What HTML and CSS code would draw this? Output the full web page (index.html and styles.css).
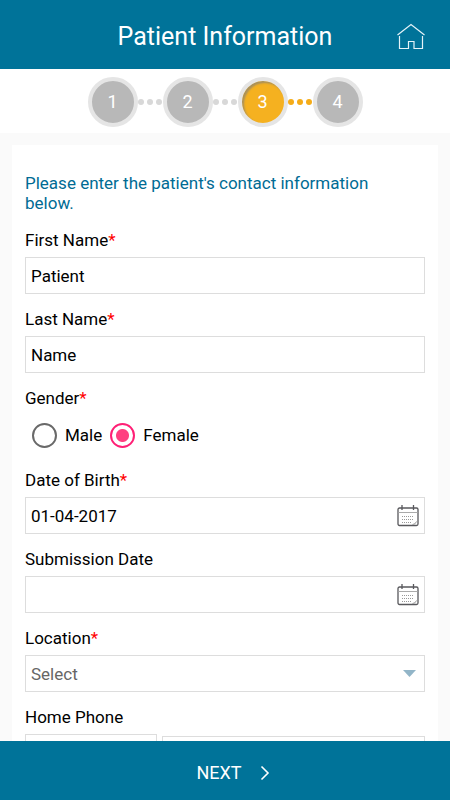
FILE: index.html
```
<!DOCTYPE html>
<html lang="en">
<head>
<meta charset="utf-8">
<meta name="viewport" content="width=device-width, initial-scale=1">
<title>Patient Information</title>
<link rel="stylesheet" href="styles.css">
</head>
<body>
<svg width="0" height="0" class="sprite" aria-hidden="true">
  <symbol id="calendar" viewBox="0 0 22 23">
    <rect x="1" y="4" width="20" height="17.5" rx="1.5" fill="#fff" stroke="#58585c" stroke-width="1.3"/>
    <path d="M1.500 8.500h19" stroke="#aaa" stroke-width="1"/>
    <path d="M5 1v5M16.500 1v5" stroke="#58585c" stroke-width="1.3"/>
    <path d="M5 12.500h12M5 15.500h12M5 18.500h9" stroke="#999" stroke-width="1" stroke-dasharray="1 1"/>
    <path d="M15.500 20.500q3 0 4-3" fill="none" stroke="#999" stroke-width="1"/>
  </symbol>
</svg>
<header class="header">
  <h1>Patient Information</h1>
  <a class="home" href="#" aria-label="Home">
    <svg width="30" height="28" viewBox="0 0 30 28" fill="none" stroke="#e4f3f8" stroke-width="1.2"><path d="M1.500 12L15 1.500 28.500 12M3.500 13v12.500h9V18.500h5.500v7h8.500V13"/></svg>
  </a>
</header>
<ol class="steps">
  <li class="step">1</li>
  <li class="dots" aria-hidden="true"><i></i><i></i><i></i></li>
  <li class="step">2</li>
  <li class="dots" aria-hidden="true"><i></i><i></i><i></i></li>
  <li class="step current" aria-current="step">3</li>
  <li class="dots active" aria-hidden="true"><i></i><i></i><i></i></li>
  <li class="step">4</li>
</ol>
<main class="content">
  <form class="card" id="patient">
    <p class="intro">Please enter the patient's contact information below.</p>
    <div class="field">
      <label for="first">First Name<span class="req">*</span></label>
      <input class="control" id="first" type="text" value="Patient">
    </div>
    <div class="field">
      <label for="last">Last Name<span class="req">*</span></label>
      <input class="control" id="last" type="text" value="Name">
    </div>
    <fieldset class="field">
      <legend>Gender<span class="req">*</span></legend>
      <div class="radios">
        <label class="radio"><input type="radio" name="gender">Male</label>
        <label class="radio"><input type="radio" name="gender" checked>Female</label>
      </div>
    </fieldset>
    <div class="field">
      <label for="dob">Date of Birth<span class="req">*</span></label>
      <div class="date">
        <input class="control" id="dob" type="text" value="01-04-2017">
        <button type="button" aria-label="Choose date of birth"><svg width="22" height="23"><use href="#calendar"/></svg></button>
      </div>
    </div>
    <div class="field">
      <label for="submitted">Submission Date</label>
      <div class="date">
        <input class="control" id="submitted" type="text">
        <button type="button" aria-label="Choose submission date"><svg width="22" height="23"><use href="#calendar"/></svg></button>
      </div>
    </div>
    <div class="field">
      <label for="location">Location<span class="req">*</span></label>
      <div class="drop">
        <select class="control" id="location"><option>Select</option></select>
        <svg width="13" height="7" viewBox="0 0 13 7" aria-hidden="true"><path d="M0 0h13L6.500 7z" fill="#92b5c8"/></svg>
      </div>
    </div>
    <div class="field">
      <label for="phone">Home Phone</label>
      <div class="phone">
        <input class="control" type="tel" aria-label="Country code">
        <input class="control number" id="phone" type="tel">
      </div>
    </div>
  </form>
</main>
<button class="next" type="submit" form="patient">NEXT
  <svg width="10" height="16" viewBox="0 0 10 16" fill="none" stroke="#fff" stroke-width="1.6"><path d="M1.500 1.500L8 8l-6.500 6.500"/></svg>
</button>
</body>
</html>
```
FILE: styles.css
```
* { box-sizing: border-box; }

body {
  margin: 0;
  height: 100vh;
  display: flex;
  flex-direction: column;
  background: #fafafa;
  color: #000;
  font: 17px/20px Roboto, sans-serif;
}

.sprite { position: absolute; }

.header {
  flex: none;
  height: 69px;
  display: grid;
  grid-template-columns: 1fr auto 1fr;
  align-items: center;
  padding: 4px 24px 0;
  background: #007399;
  color: #fff;
}

.header h1 {
  grid-column: 2;
  margin: 0;
  font-size: 25px;
  line-height: 32px;
  font-weight: 400;
}

.home { justify-self: end; display: flex; }

.steps {
  flex: none;
  height: 64px;
  margin: 0;
  padding: 1px 0 0;
  display: flex;
  align-items: center;
  justify-content: center;
  list-style: none;
  background: #fff;
}

.step {
  width: 50px;
  height: 50px;
  display: flex;
  align-items: center;
  justify-content: center;
  border: 4px solid #e5e5e5;
  border-radius: 50%;
  background: #b8b8b8;
  color: #fff;
  font-size: 18px;
}

.step.current {
  background: #f5b120;
  box-shadow: inset 2px 2px 2px #a8905c;
}

.dots {
  width: 25px;
  display: flex;
  justify-content: center;
  gap: 3px;
}

.dots i {
  width: 6px;
  height: 6px;
  border-radius: 50%;
  background: #d8d8d8;
}

.dots.active i { background: #f5ac18; }

.content {
  flex: 1;
  min-height: 0;
  overflow-y: auto;
  scrollbar-width: none;
  padding: 12px 12px 0;
}

.card {
  padding: 28px 13px 20px;
  background: #fff;
}

.intro {
  margin: 0 0 17px;
  padding-right: 20px;
  color: #006b94;
}

.field {
  margin: 0 0 15px;
  padding: 0;
  border: 0;
  min-width: 0;
}

.field > label,
.field > legend {
  display: block;
  margin-bottom: 7px;
  padding: 0;
}

.req { color: #f00; }

.control {
  display: block;
  width: 100%;
  height: 37px;
  margin: 0;
  padding: 0 5px;
  appearance: none;
  border: 1px solid #ddd;
  border-radius: 0;
  background: #fff;
  color: #000;
  font: inherit;
}

select.control { color: #666; }

.radios {
  height: 40px;
  display: flex;
  align-items: center;
  gap: 8px;
  padding-left: 7px;
}

.radio {
  display: flex;
  align-items: center;
  gap: 8px;
}

.radio input {
  appearance: none;
  width: 25px;
  height: 25px;
  margin: 0;
  border: 2px solid #696969;
  border-radius: 50%;
}

.radio input:checked {
  border-color: #ff1f75;
  background: radial-gradient(circle, #ff3f80 6px, #fff 7px);
}

.date,
.drop { position: relative; }

.date button {
  position: absolute;
  top: 7px;
  right: 6px;
  display: flex;
  padding: 0;
  border: 0;
  background: none;
}

.drop svg {
  position: absolute;
  top: 15px;
  right: 9px;
  pointer-events: none;
}

.phone {
  display: grid;
  grid-template-columns: 1fr 2fr;
  align-items: end;
  gap: 5px;
}

.number { height: 35px; }

.next {
  flex: none;
  height: 59px;
  display: flex;
  align-items: center;
  justify-content: center;
  gap: 18px;
  padding: 4px 0 0 16px;
  border: 0;
  background: #007399;
  color: #fff;
  font: 18px/24px Roboto, sans-serif;
}
```
